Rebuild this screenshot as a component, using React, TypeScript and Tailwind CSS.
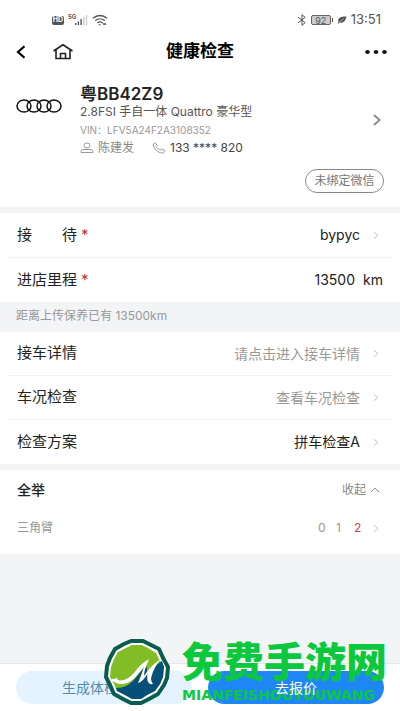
import { useState } from "react";
import type { ReactNode } from "react";

type DetailRow = {
  label: string;
  value: string;
  muted: boolean;
};

const detailRows: DetailRow[] = [
  { label: "接车详情", value: "请点击进入接车详情", muted: true },
  { label: "车况检查", value: "查看车况检查", muted: true },
  { label: "检查方案", value: "拼车检查A", muted: false },
];

function Chevron({ className }: { className: string }) {
  return (
    <svg viewBox="0 0 8 12" fill="none" stroke="currentColor" className={className}>
      <path d="M1.2 1.5 6.6 6 1.2 10.5" strokeWidth="1.2" />
    </svg>
  );
}

function StatusBar() {
  return (
    <div className="flex h-8 items-end justify-between pr-[19px] pl-[52px] text-[#555]">
      <div className="flex h-6 items-center">
        <span className="flex h-[9px] w-3 items-center justify-center rounded-xs bg-[#555] text-[7px] font-bold text-white">
          HD
        </span>
        <svg viewBox="0 0 20 12" className="ml-1 h-3 w-5" fill="currentColor">
          <text x="0" y="5" fontSize="6" fontWeight="700">
            5G
          </text>
          <path d="M7 9h1.4v2H7zM9.7 7.5h1.4V11H9.7zM12.4 5h1.4v6h-1.4z" />
          <path d="M15.1 3h1.4v8h-1.4zM17.8 1h1.4v10h-1.4z" fill="#ccc" />
        </svg>
        <svg viewBox="0 0 16 12" className="ml-1 h-3 w-4" fill="none" stroke="currentColor" strokeWidth="1.3">
          <path d="M1 4.2C5 .6 11 .6 15 4.2M3.2 6.6c2.8-2.4 6.8-2.4 9.6 0M5.4 9c1.6-1.3 3.6-1.3 5.2 0" />
          <path d="M6.6 10.8h2M11 9l1 2 1-2 1 2" strokeWidth="1" />
        </svg>
      </div>
      <div className="flex h-6 items-center">
        <svg viewBox="0 0 10 12" className="h-3 w-[10px]" fill="none" stroke="currentColor" strokeWidth="1">
          <path d="M1 3.2 8.2 8.6 5 11.3V.7l3.2 2.7L1 8.8" />
        </svg>
        <span className="ml-1 flex h-[10px] w-5 items-center justify-center rounded-xs border border-[#666] bg-[#ccc] text-[9px] leading-none">
          92
        </span>
        <span className="ml-px h-1 w-px bg-[#555]" />
        <svg viewBox="0 0 10 8" className="ml-1 h-2 w-[10px]" fill="currentColor">
          <path d="M9.5.5C5 .2 1.2 1.2 1.2 4.6c0 .7.2 1.2.4 1.5L.6 7.4l.8.4 1-1.2C6.5 7.6 8.6 4.5 9.5.5Z" />
          <path d="M2.4 6.2 6.6 2.7" stroke="white" strokeWidth=".5" />
        </svg>
        <span className="ml-1 text-[13px]">13:51</span>
      </div>
    </div>
  );
}

function Header() {
  return (
    <header className="grid h-10 grid-cols-3 items-center px-3">
      <div className="flex items-center">
        <button aria-label="返回" className="px-1 text-black">
          <svg viewBox="0 0 10 14" className="h-[14px] w-[10px]" fill="none" stroke="currentColor" strokeWidth="2.2">
            <path d="M8.5 1.2 2 7l6.5 5.8" />
          </svg>
        </button>
        <button aria-label="首页" className="ml-[22px] text-[#222]">
          <svg viewBox="0 0 22 18" className="h-[18px] w-[22px]" fill="none" stroke="currentColor" strokeWidth="1.6">
            <path d="M1.5 8 11 1.8 20.5 8M4 6.6V15.5h14V6.6M8.5 15.5v-5h5v5" />
          </svg>
        </button>
      </div>
      <h1 className="text-center text-[17px] font-bold text-black">健康检查</h1>
      <button aria-label="更多" className="justify-self-end text-[#111]">
        <svg viewBox="0 0 24 6" className="h-[6px] w-6" fill="currentColor">
          <ellipse cx="3.5" cy="3" rx="2.3" ry="1.9" />
          <ellipse cx="12" cy="3" rx="2.3" ry="1.9" />
          <ellipse cx="20.5" cy="3" rx="2.3" ry="1.9" />
        </svg>
      </button>
    </header>
  );
}

function VehicleCard() {
  return (
    <section className="px-4 pt-3 pb-[14px]">
      <div className="flex items-start">
        <svg viewBox="0 0 46 14" className="mt-[15px] h-[14px] w-[46px] shrink-0" fill="none" stroke="#111" strokeWidth="1.5">
          <ellipse cx="8" cy="7" rx="7" ry="6" />
          <ellipse cx="18" cy="7" rx="7" ry="6" />
          <ellipse cx="28" cy="7" rx="7" ry="6" />
          <ellipse cx="38" cy="7" rx="7" ry="6" />
        </svg>
        <div className="ml-[18px] flex-1">
          <h2 className="text-[17px] leading-5 font-semibold text-[#222]">粤BB42Z9</h2>
          <p className="text-xs leading-4 text-[#555]">2.8FSI 手自一体 Quattro 豪华型</p>
          <p className="mt-[2px] text-[10px] leading-4 text-[#999]">VIN：LFV5A24F2A3108352</p>
          <div className="mt-[2px] mb-px flex items-center text-xs leading-4">
            <svg viewBox="0 0 14 12" className="h-3 w-[14px]" fill="none" stroke="#999" strokeWidth="1">
              <ellipse cx="7" cy="3.5" rx="3" ry="2.5" />
              <path d="M1 10.5V9.3C1 8 2.5 7.5 4 7.5h6c1.5 0 3 .5 3 1.8v1.2Z" />
            </svg>
            <span className="ml-1 text-[#888]">陈建发</span>
            <svg viewBox="0 0 14 12" className="ml-[18px] h-3 w-[14px]" fill="none" stroke="#999" strokeWidth="1">
              <path d="m3.3 1 2 2.4-1.2 1.3c.8 1.5 2.2 2.6 4 3.4l1.5-1.1L12.8 8.6c.2 1.2-1 2.4-2.7 2.4C5.5 10.5 1.3 6.7 1.2 2.8 1.3 1.8 2 1 3.3 1Z" />
            </svg>
            <span className="ml-1 text-[#444]">133 **** 820</span>
          </div>
        </div>
        <button aria-label="车辆信息" className="mt-[30px] mr-[3px] text-[#888]">
          <svg viewBox="0 0 8 12" className="h-3 w-2" fill="none" stroke="currentColor" strokeWidth="1.8">
            <path d="M1 1 6.6 6 1 11" />
          </svg>
        </button>
      </div>
      <div className="mt-3 flex justify-end">
        <button className="h-6 w-[79px] rounded-full border border-[#888] text-xs text-[#777]">
          未绑定微信
        </button>
      </div>
    </section>
  );
}

function ValueWithArrow({ children }: { children: ReactNode }) {
  return (
    <span className="flex items-center gap-3">
      {children}
      <Chevron className="h-[9px] w-2 text-[#bbb]" />
    </span>
  );
}

// Round badge: dark green twelve-sided rim, light green sky and a blue slope
function BadgeLogo() {
  return (
    <svg viewBox="0 0 66 66" className="h-[66px] w-[66px] shrink-0">
      <path
        d="M27 2H39L45 5 55 10 59 19 64 28 63 39 60 46 54 55 45 60 37 64H27L19 60 10 55 6 46 2 38 3 27 6 19 11 10 20 5Z"
        fill="white"
        stroke="#085c50"
        strokeWidth="4"
        strokeLinejoin="round"
      />
      <path d="M28 6H38L44 9 52 14 55 20 60 28 59 38 56 45 51 52 43 56 37 60H28L21 56 13 52 10 45 6 38 7 28 10 20 14 13 22 9Z" fill="#82bd25" />
      <path d="M12 49c8 0 13-3 18-8l9-11 4-2v10l8-11 7-5 2 6-1 10-3 7-5 7-8 4-6 4h-9l-7-4-8-4Z" fill="#064f78" />
      <path
        d="M7 41c2-2 4-1 6-2l1 2c2 1 4 0 6 0 6-2 10-7 13-11 3-4 7-7 12-10-3 7-5 12-5 17 5-7 9-12 17-17-7 8-9 15-10 20 0 2 1 3 2 5-5 1-7-4-5-11-3 5-6 9-10 10 2-5 4-10 6-16-6 7-11 14-17 16-6 2-11 1-16-3Z"
        fill="white"
      />
    </svg>
  );
}

export default function App() {
  const [mileage, setMileage] = useState("13500");
  const [expanded, setExpanded] = useState(true);

  return (
    <div className="relative flex min-h-screen flex-col bg-[#f3f4f6] font-[Inter,'Noto_Sans_CJK_SC',sans-serif]">
      <div className="bg-white">
        <StatusBar />
        <Header />
        <VehicleCard />
      </div>

      <section className="mt-[6px] bg-white text-[15px] text-[#222]">
        <button className="flex h-11 w-full items-center justify-between pr-5 pl-[17px]">
          <span className="flex items-center">
            <span className="flex w-15 justify-between">
              <span>接</span>
              <span>待</span>
            </span>
            <span className="ml-1 text-[#b33a3a]">*</span>
          </span>
          <ValueWithArrow>
            <span className="text-sm">bypyc</span>
          </ValueWithArrow>
        </button>
        <div className="mx-2 h-px bg-[#f2f2f2]" />
        <div className="flex h-11 items-center justify-between px-[17px]">
          <label htmlFor="mileage" className="flex items-center">
            进店里程
            <span className="ml-1 text-[#b33a3a]">*</span>
          </label>
          <span className="flex items-center gap-2 text-sm">
            <input
              id="mileage"
              value={mileage}
              onChange={(e) => setMileage(e.target.value)}
              className="w-20 bg-transparent text-right outline-none"
            />
            km
          </span>
        </div>
      </section>

      <p className="h-[30px] px-4 text-xs leading-7 text-[#999]">距离上传保养已有 13500km</p>

      <section className="divide-y divide-[#f2f2f2] bg-white px-2 text-[15px] text-[#222]">
        {detailRows.map((row) => (
          <button key={row.label} className="flex h-11 w-full items-center justify-between pr-3 pl-[9px]">
            <span>{row.label}</span>
            <ValueWithArrow>
              <span className={row.muted ? "text-sm text-[#999]" : "text-sm text-[#222]"}>{row.value}</span>
            </ValueWithArrow>
          </button>
        ))}
      </section>

      <section className="mt-[6px] bg-white pr-5 pb-2 pl-[17px]">
        <div className="flex h-10 items-center justify-between">
          <h2 className="text-sm font-medium text-[#222]">全举</h2>
          <button
            onClick={() => setExpanded(!expanded)}
            className="flex items-center gap-1 text-xs text-[#888]"
          >
            {expanded ? "收起" : "展开"}
            <svg viewBox="0 0 10 6" className={expanded ? "h-[6px] w-[10px]" : "h-[6px] w-[10px] rotate-180"} fill="none" stroke="currentColor">
              <path d="M.8 5.2 5 1.2l4.2 4" />
            </svg>
          </button>
        </div>
        {expanded && (
          <button className="flex h-9 w-full items-center justify-between text-xs text-[#999]">
            <span>三角臂</span>
            <span className="flex items-center text-left">
              <span className="w-[18px]">0</span>
              <span className="w-[18px]">1</span>
              <span className="w-[18px] text-[#b04a5a]">2</span>
              <Chevron className="h-[9px] w-2 text-[#bbb]" />
            </span>
          </button>
        )}
      </section>

      <footer className="mt-auto flex h-12 gap-4 border-t border-[#e6e6e6] bg-white px-4 py-[7px]">
        <button className="h-[33px] flex-1 rounded-full bg-[#e5f2ff] text-sm text-[#4a8fad]">
          生成体检报告
        </button>
        <button className="h-[33px] flex-1 rounded-full bg-[#1e87f5] text-sm text-white">
          <span className="relative z-10">去报价</span>
        </button>
      </footer>

      <div className="pointer-events-none absolute bottom-[6px] left-26 flex items-center gap-3">
        <BadgeLogo />
        <div className="text-[#0bc83c]">
          <p className="text-[41px] leading-[46px] font-black whitespace-nowrap">免费手游网</p>
          <p className="font-['DejaVu_Sans',sans-serif] text-sm leading-5 font-bold">MIANFEISHOUYOUWANG</p>
        </div>
      </div>
    </div>
  );
}
